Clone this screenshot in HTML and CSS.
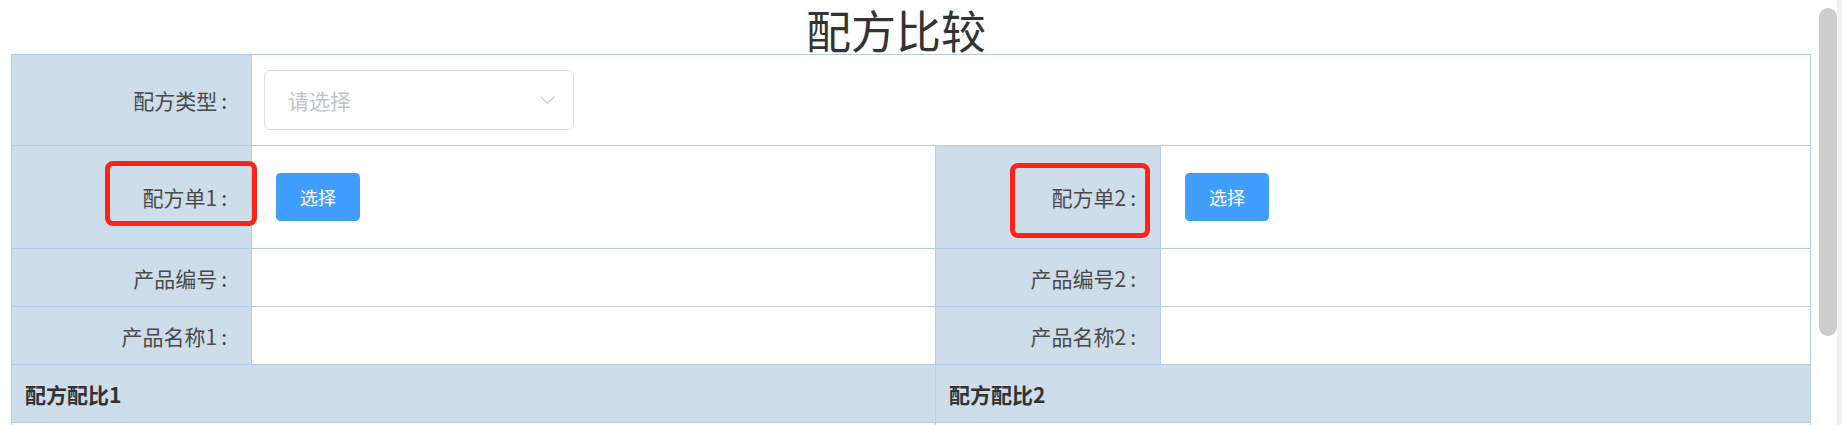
FILE: index.html
```html
<!DOCTYPE html>
<html lang="zh-CN">
<head>
<meta charset="utf-8">
<title>配方比较</title>
<link rel="stylesheet" href="styles.css">
</head>
<body>
<div class="page">
  <div class="title">配方比较</div>
  <div class="form">
    <div class="cell label">配方类型<span class="colon">:</span></div>
    <div class="cell span3">
      <div class="select">
        <span class="placeholder">请选择</span>
        <svg class="arrow" width="15" height="8" viewBox="0 0 15 8"><polyline points="0.6,0.6 7.5,7.4 14.4,0.6" fill="none" stroke="#c0c4cc" stroke-width="1.2"/></svg>
      </div>
    </div>

    <div class="cell label mark-host">配方单1<span class="colon">:</span><span class="mark mark1"></span></div>
    <div class="cell"><button class="btn">选择</button></div>
    <div class="cell label mark-host">配方单2<span class="colon">:</span><span class="mark mark2"></span></div>
    <div class="cell"><button class="btn">选择</button></div>

    <div class="cell label">产品编号<span class="colon">:</span></div>
    <div class="cell"></div>
    <div class="cell label">产品编号2<span class="colon">:</span></div>
    <div class="cell"></div>

    <div class="cell label">产品名称1<span class="colon">:</span></div>
    <div class="cell"></div>
    <div class="cell label">产品名称2<span class="colon">:</span></div>
    <div class="cell"></div>

    <div class="cell head span2">配方配比1</div>
    <div class="cell head span2">配方配比2</div>

    <div class="cell span2"></div>
    <div class="cell span2"></div>
  </div>
</div>
<div class="scrollbar"><div class="thumb"></div></div>
</body>
</html>
```

FILE: styles.css
```css
html, body {
  margin: 0;
  padding: 0;
  background: #fff;
}

body {
  font-family: "Noto Sans CJK SC", "Microsoft YaHei", sans-serif;
  color: #333;
}

.scrollbar {
  position: fixed;
  top: 0;
  right: 0;
  width: 23px;
  height: 100vh;
  background: linear-gradient(to right, #ffffff 18px, #eef2f6 18px);
}

.thumb {
  position: absolute;
  top: 8px;
  left: 0;
  width: 18px;
  height: 328px;
  border-radius: 9px;
  background: #cdcdcd;
}

.page {
  box-sizing: border-box;
  min-height: 525px;
  padding: 0 31px 0 11px;
}

.title {
  height: 54px;
  line-height: 60px;
  font-size: 45px;
  text-align: center;
  color: #333;
  margin-right: 30px;
  white-space: nowrap;
}

.form {
  display: grid;
  grid-template-columns: 240px 684px 225px 650px;
  grid-template-rows: 91px 103px 58px 58px 58px 90px;
  border-left: 1px solid #b5cdea;
  border-top: 1px solid #b5cdea;
  width: 1800px;
  box-sizing: border-box;
}

.cell {
  box-sizing: border-box;
  border-right: 1px solid #b5cdea;
  border-bottom: 1px solid #b5cdea;
  display: flex;
  align-items: center;
  background: #fff;
}

.span3 {
  grid-column: span 3;
}

.span2 {
  grid-column: span 2;
}

.label {
  background: #cddde9;
  justify-content: flex-end;
  padding-right: 24px;
  font-size: 21px;
  color: #4a4a4a;
  white-space: nowrap;
}

.colon {
  margin-left: 4px;
}

.head {
  background: #cddde9;
  padding-left: 13px;
  font-size: 21px;
  font-weight: bold;
  color: #333;
}

.select {
  box-sizing: border-box;
  margin-left: 12px;
  width: 310px;
  height: 60px;
  border: 1px solid #dcdfe6;
  border-radius: 6px;
  display: flex;
  align-items: center;
  justify-content: space-between;
  padding: 0 18px 0 23px;
}

.placeholder {
  font-size: 21px;
  color: #c0c4cc;
}

.arrow {
  display: block;
}

.btn {
  margin-left: 24px;
  width: 84px;
  height: 48px;
  border: none;
  border-radius: 4.5px;
  background: #409eff;
  color: #fff;
  font-family: "Noto Sans CJK SC", "Microsoft YaHei", sans-serif;
  font-size: 18px;
  padding: 0;
}

.mark-host {
  position: relative;
}

.mark {
  position: absolute;
  box-sizing: border-box;
  border: 5px solid #ff2217;
  border-radius: 8px;
}

.mark1 {
  left: 93px;
  top: 15px;
  width: 152px;
  height: 65px;
}

.mark2 {
  left: 74px;
  top: 17px;
  width: 140px;
  height: 75px;
}
```
